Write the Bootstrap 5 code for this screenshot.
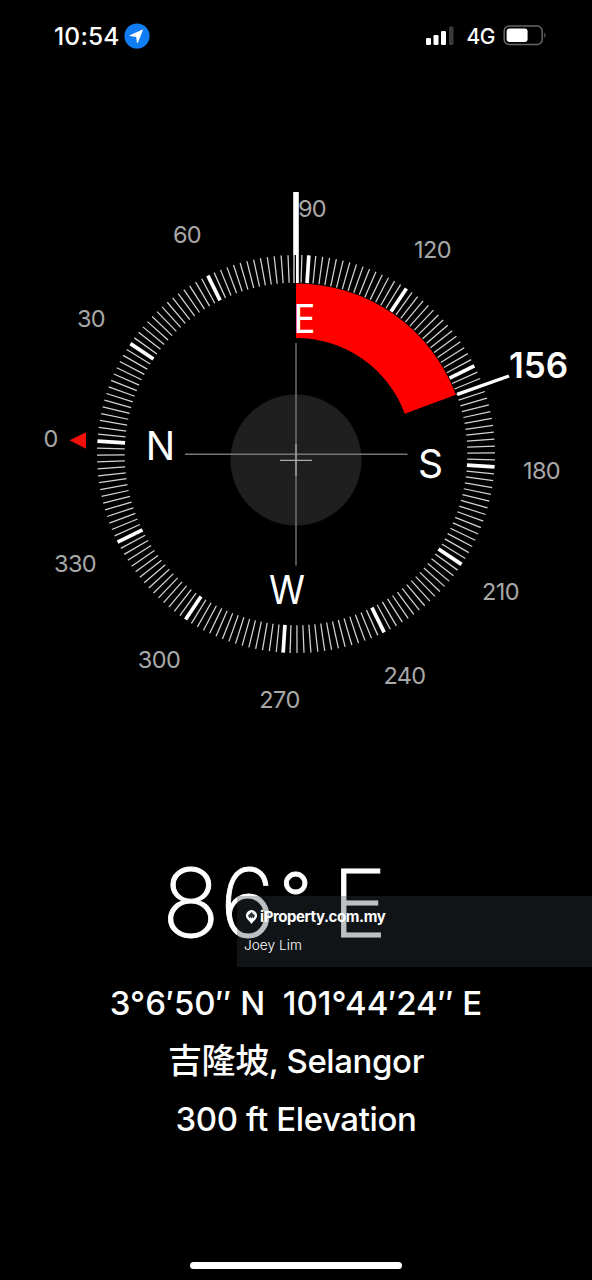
<!DOCTYPE html>
<html lang="en">
<head>
<meta charset="utf-8">
<meta name="viewport" content="width=device-width, initial-scale=1">
<title>Compass</title>
<link href="https://cdn.jsdelivr.net/npm/bootstrap@5.3.0/dist/css/bootstrap.min.css" rel="stylesheet">
<style>
body{background:#000;color:#fff;font-family:Inter,"Noto Sans CJK SC",sans-serif}
.phone{width:592px;height:1280px}
.status{height:72px;padding:0 45px 0 54px}
.clock{font-size:24.5px;font-weight:500;line-height:1;letter-spacing:.2px}
.network{font-size:21px;font-weight:500;line-height:1;letter-spacing:-.5px}
.dial{margin-top:108px;height:550px}
.dial text{font-family:Inter,sans-serif}
.degree{font-size:23.5px;fill:#a8a8a8;text-anchor:middle;letter-spacing:-.6px}
.cardinal{font-size:39px;fill:#fff;text-anchor:middle}
.bearing{font-size:35px;font-weight:600;fill:#fff;text-anchor:middle}
.heading{height:244px;padding:99px 0 0 162px}
.reading{font-size:95.5px;font-weight:200;line-height:146px;letter-spacing:0;white-space:pre;-webkit-text-stroke:.9px #fff}
.ring{font-size:71px;font-weight:300;line-height:0;vertical-align:13px;margin-left:4px;letter-spacing:0}
.east{font-size:94px;line-height:0;margin-left:20px}
.place{font-size:33px;font-weight:500;line-height:58px;white-space:pre}
.place.tight{letter-spacing:-.4px}
.cjk{font-size:34px;line-height:0}
.agent{right:0;top:166px;width:355px;height:71px;background:rgba(50,62,72,.32);padding:11px 7px}
.site{font-size:15px;font-weight:700;line-height:20px;letter-spacing:-.42px}
.person{font-size:13.7px;font-weight:300;line-height:18px;margin-top:9px}
.homebar{width:212px;height:7px;margin-bottom:11px}
</style>
</head>
<body>
<main class="phone d-flex flex-column overflow-hidden">
  <header class="status d-flex align-items-center justify-content-between flex-shrink-0">
    <div class="d-flex align-items-center gap-1">
      <span class="clock">10:54</span>
      <svg class="ms-auto" width="26" height="26" viewBox="0 0 26 26"><circle cx="13" cy="13" r="12.6" fill="#117df5"/><path d="M19.2 6.3 5.8 12.2q-.7.6.2.9l6.2.8.7 5.7q.4.9 1 .1Z" fill="#fff"/></svg>
    </div>
    <div class="d-flex align-items-center">
      <svg width="33" height="20" viewBox="0 0 33 20"><g fill="#fff"><rect x="0" y="12" width="5" height="7" rx="1.3"/><rect x="7.5" y="9" width="5" height="10" rx="1.3"/><rect x="15" y="5" width="5" height="14" rx="1.3"/></g><rect x="23" y="0.500" width="4.5" height="18.500" rx="1.3" fill="#3a3a3a"/></svg>
      <span class="network ms-2">4G</span>
      <svg class="ms-2" width="44" height="22" viewBox="0 0 44 22"><rect x="1.2" y="1" width="38" height="18.5" rx="5" fill="none" stroke="#666" stroke-width="1.5"/><rect x="3.6" y="3.5" width="21" height="13.5" rx="3" fill="#fff"/><path d="M41.3 7.3q2.3 3 0 6Z" fill="#666"/></svg>
    </div>
  </header>
  <svg class="dial flex-shrink-0" width="592" height="550" viewBox="0 180 592 550">
    <circle cx="296" cy="460" r="65.5" fill="#1f1f1f"/>
    <path d="M296 343V565.5M185 454.3H407.5" stroke="#757575" stroke-width="1.4"/>
    <path d="M296 444V476M280 460.4H312" stroke="#aaa" stroke-width="1.2"/>
    <path d="M296 283.5A170.5 170.5 0 0 1 455.9 394.8L404.8 413.8A116 116 0 0 0 296 338Z" fill="#f00"/>
    <path d="M296 192V255" stroke="#fff" stroke-width="5.6"/>
    <path d="M297.4 255V283" stroke="#fff" stroke-width="2.8"/>
    <path d="M294 255V283" stroke="#ccc" stroke-width="1.5"/>
    <g id="ticks"></g>
    <path d="M457.2 394.4 509 376" stroke="#fff" stroke-width="3.4"/>
    <path d="M69.5 440.3 86 432.3V448.7Z" fill="#f0100c"/>
    <g class="degree">
      <text x="312" y="217">90</text><text x="432.5" y="258">120</text><text x="541.5" y="478.500">180</text>
      <text x="500.5" y="599.500">210</text><text x="404.5" y="683.500">240</text><text x="279.5" y="708">270</text>
      <text x="159" y="667.500">300</text><text x="75" y="571.500">330</text><text x="50.5" y="447">0</text>
      <text x="91" y="326.500">30</text><text x="187" y="242.500">60</text>
    </g>
    <g class="cardinal"><text x="304.500" y="333" textLength="22" lengthAdjust="spacingAndGlyphs">E</text><text x="160.5" y="459.5">N</text><text x="430.5" y="477.5">S</text><text x="287" y="603.5" textLength="36" lengthAdjust="spacingAndGlyphs">W</text></g>
    <text class="bearing" x="538.5" y="377.5">156</text>
  </svg>
  <section class="position-relative text-center">
    <div class="heading text-start"><span class="reading">86<span class="ring">°</span><span class="east">E</span></span></div>
    <div class="place">3°6′50″ N  101°44′24″ E</div>
    <div class="place tight"><span class="cjk">吉隆坡</span>, Selangor</div>
    <div class="place tight">300 ft Elevation</div>
    <aside class="agent position-absolute text-start">
      <div class="site d-flex align-items-center"><svg width="16" height="16" viewBox="0 0 16 16"><path d="M7.5 1a5.6 5.6 0 0 1 5.6 5.6C13.1 10 9.5 12 7.5 15 5.5 12 1.9 10 1.9 6.6A5.6 5.6 0 0 1 7.5 1Z" fill="#fff"/><path d="M7.5 3 11 6.500 9.500 9.500 8.500 8 7.500 9.500 6.500 8 5.500 9.500 4 6.500Z" fill="#30383d"/></svg><span>iProperty.com.my</span></div>
      <div class="person">Joey Lim</div>
    </aside>
  </section>
  <div class="homebar bg-white rounded-pill mt-auto mx-auto flex-shrink-0"></div>
</main>
<script src="https://cdn.jsdelivr.net/npm/bootstrap@5.3.0/dist/js/bootstrap.bundle.min.js"></script>
<script>
const heading = 86.3;
const ticks = document.getElementById('ticks');
for (let b = 0; b < 360; b += 2) {
  if (b === 86) continue; // covered by the heading needle
  const major = b % 30 === 0;
  const l = document.createElementNS('http://www.w3.org/2000/svg', 'line');
  const attrs = {x1:296, x2:296, y1:255, y2:282.7, stroke: major ? '#fff' : '#d4d4d4',
    'stroke-width': major ? 3.7 : 1.25, transform:`rotate(${b - heading} 296 454)`};
  for (const k in attrs) l.setAttribute(k, attrs[k]);
  ticks.append(l);
}
</script>
</body>
</html>
